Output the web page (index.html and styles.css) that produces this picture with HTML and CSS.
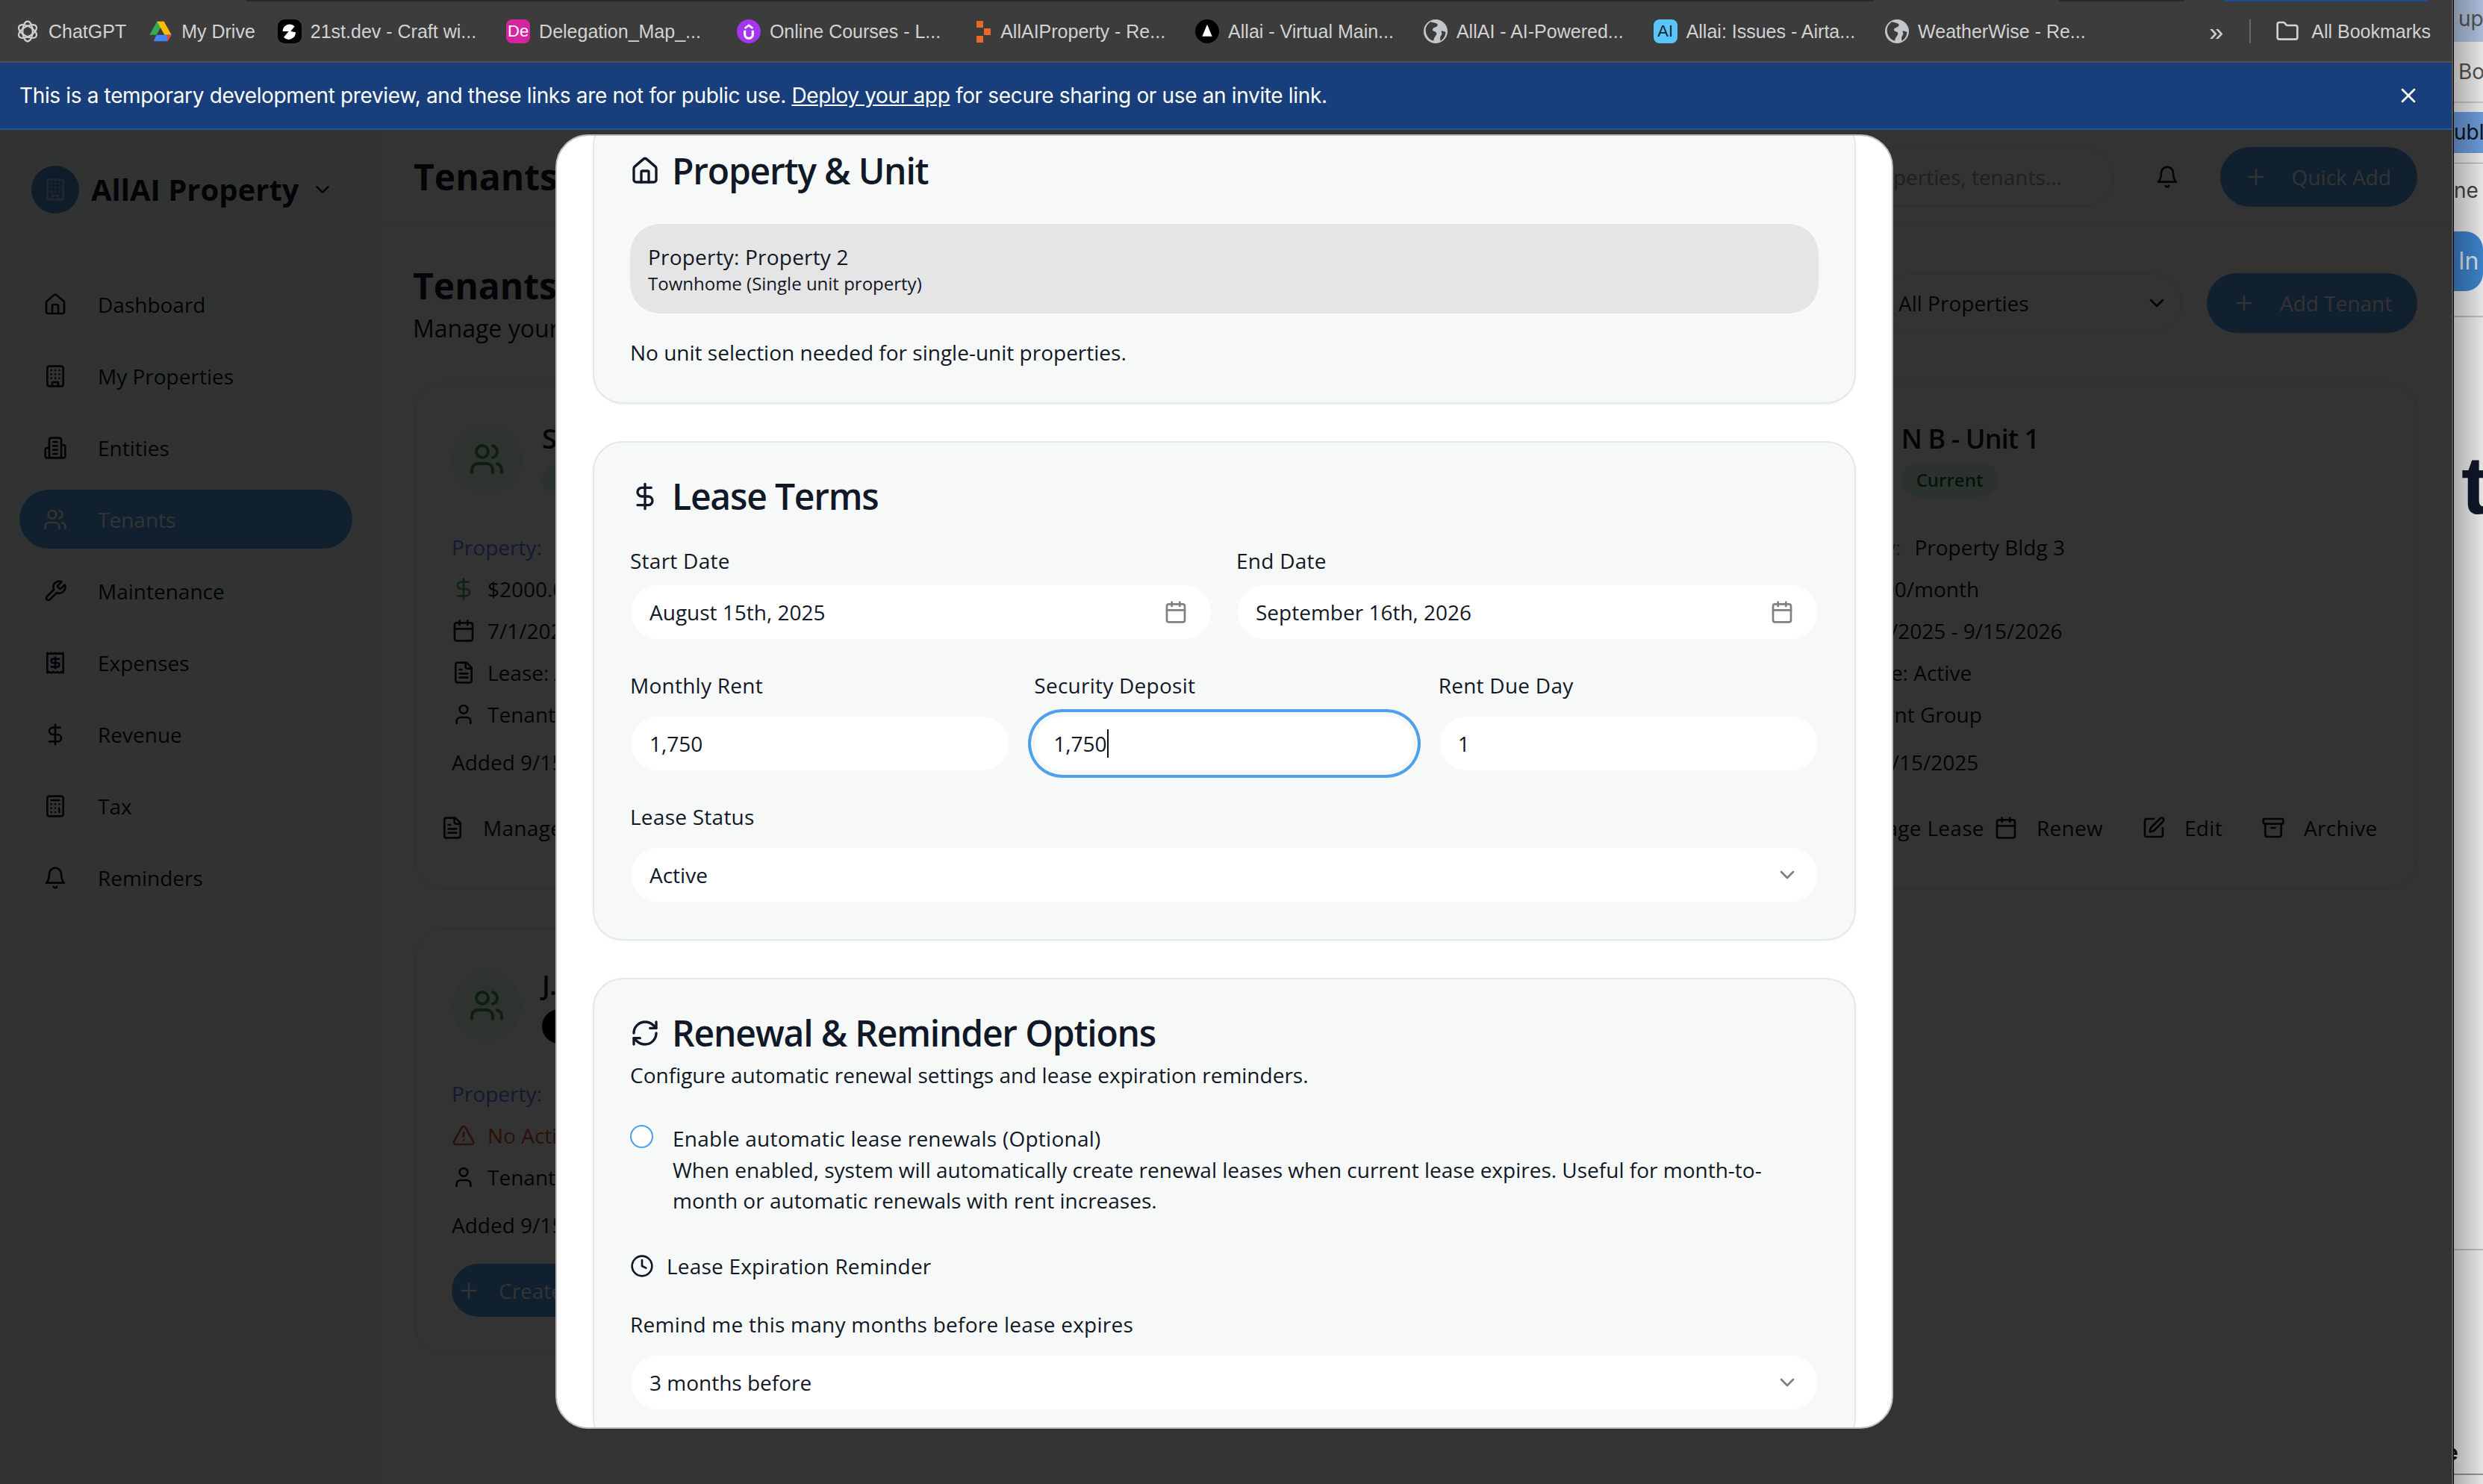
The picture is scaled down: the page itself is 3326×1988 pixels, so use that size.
FILE: index.html
```html
<!DOCTYPE html>
<html>
  <head>
    <meta charset="UTF-8" />
    <title>Tenants - AllAI Property</title>
    <link rel="stylesheet" href="styles.css">
  </head>
  <body>
    <svg class="sprite" xmlns="http://www.w3.org/2000/svg">
      <symbol id="i-home" viewBox="0 0 24 24"><path d="M15 21v-8a1 1 0 0 0-1-1h-4a1 1 0 0 0-1 1v8"/><path d="M3 10a2 2 0 0 1 .709-1.528l7-5.999a2 2 0 0 1 2.582 0l7 5.999A2 2 0 0 1 21 10v9a2 2 0 0 1-2 2H5a2 2 0 0 1-2-2z"/></symbol>
      <symbol id="i-building" viewBox="0 0 24 24"><rect width="16" height="20" x="4" y="2" rx="2"/><path d="M9 22v-4h6v4"/><path d="M8 6h.01M16 6h.01M12 6h.01M12 10h.01M12 14h.01M16 10h.01M16 14h.01M8 10h.01M8 14h.01"/></symbol>
      <symbol id="i-entities" viewBox="0 0 24 24"><path d="M6 22V4a2 2 0 0 1 2-2h8a2 2 0 0 1 2 2v18Z"/><path d="M6 12H4a2 2 0 0 0-2 2v6a2 2 0 0 0 2 2h2"/><path d="M18 9h2a2 2 0 0 1 2 2v9a2 2 0 0 1-2 2h-2"/><path d="M10 6h4M10 10h4M10 14h4M10 18h4"/></symbol>
      <symbol id="i-users" viewBox="0 0 24 24"><path d="M16 21v-2a4 4 0 0 0-4-4H6a4 4 0 0 0-4 4v2"/><circle cx="9" cy="7" r="4"/><path d="M22 21v-2a4 4 0 0 0-3-3.87"/><path d="M16 3.13a4 4 0 0 1 0 7.75"/></symbol>
      <symbol id="i-wrench" viewBox="0 0 24 24"><path d="M14.7 6.3a1 1 0 0 0 0 1.4l1.6 1.6a1 1 0 0 0 1.4 0l3.77-3.77a6 6 0 0 1-7.94 7.94l-6.91 6.91a2.12 2.12 0 0 1-3-3l6.91-6.91a6 6 0 0 1 7.94-7.94l-3.76 3.76z"/></symbol>
      <symbol id="i-receipt" viewBox="0 0 24 24"><path d="M4 2v20l2-1 2 1 2-1 2 1 2-1 2 1 2-1 2 1V2l-2 1-2-1-2 1-2-1-2 1-2-1-2 1Z"/><path d="M16 8h-6a2 2 0 1 0 0 4h4a2 2 0 1 1 0 4H8"/><path d="M12 17.5v-11"/></symbol>
      <symbol id="i-dollar" viewBox="0 0 24 24"><path d="M12 2v20"/><path d="M17 5H9.5a3.5 3.5 0 0 0 0 7h5a3.5 3.5 0 0 1 0 7H6"/></symbol>
      <symbol id="i-calc" viewBox="0 0 24 24"><rect width="16" height="20" x="4" y="2" rx="2"/><path d="M8 6h8"/><path d="M16 14v4"/><path d="M16 10h.01M12 10h.01M8 10h.01M12 14h.01M8 14h.01M12 18h.01M8 18h.01"/></symbol>
      <symbol id="i-bell" viewBox="0 0 24 24"><path d="M6 8a6 6 0 0 1 12 0c0 7 3 9 3 9H3s3-2 3-9"/><path d="M10.3 21a1.94 1.94 0 0 0 3.4 0"/></symbol>
      <symbol id="i-calendar" viewBox="0 0 24 24"><path d="M8 2v4"/><path d="M16 2v4"/><rect width="18" height="18" x="3" y="4" rx="2"/><path d="M3 10h18"/></symbol>
      <symbol id="i-file" viewBox="0 0 24 24"><path d="M15 2H6a2 2 0 0 0-2 2v16a2 2 0 0 0 2 2h12a2 2 0 0 0 2-2V7Z"/><path d="M14 2v4a2 2 0 0 0 2 2h4"/><path d="M10 9H8"/><path d="M16 13H8"/><path d="M16 17H8"/></symbol>
      <symbol id="i-user" viewBox="0 0 24 24"><path d="M19 21v-2a4 4 0 0 0-4-4H9a4 4 0 0 0-4 4v2"/><circle cx="12" cy="7" r="4"/></symbol>
      <symbol id="i-alert" viewBox="0 0 24 24"><path d="m21.73 18-8-14a2 2 0 0 0-3.48 0l-8 14A2 2 0 0 0 4 21h16a2 2 0 0 0 1.73-3"/><path d="M12 9v4"/><path d="M12 17h.01"/></symbol>
      <symbol id="i-refresh" viewBox="0 0 24 24"><path d="M3 12a9 9 0 0 1 9-9 9.75 9.75 0 0 1 6.74 2.74L21 8"/><path d="M21 3v5h-5"/><path d="M21 12a9 9 0 0 1-9 9 9.75 9.75 0 0 1-6.74-2.74L3 16"/><path d="M8 16H3v5"/></symbol>
      <symbol id="i-clock" viewBox="0 0 24 24"><circle cx="12" cy="12" r="10"/><path d="M12 6v6l4 2"/></symbol>
      <symbol id="i-chevron" viewBox="0 0 24 24"><path d="m6 9 6 6 6-6"/></symbol>
      <symbol id="i-plus" viewBox="0 0 24 24"><path d="M5 12h14"/><path d="M12 5v14"/></symbol>
      <symbol id="i-pen" viewBox="0 0 24 24"><path d="M12 3H5a2 2 0 0 0-2 2v14a2 2 0 0 0 2 2h14a2 2 0 0 0 2-2v-7"/><path d="M18.375 2.625a1 1 0 0 1 3 3l-9.013 9.014a2 2 0 0 1-.853.505l-2.873.84a.5.5 0 0 1-.62-.62l.84-2.873a2 2 0 0 1 .506-.852z"/></symbol>
      <symbol id="i-archive" viewBox="0 0 24 24"><rect width="20" height="5" x="2" y="3" rx="1"/><path d="M4 8v11a2 2 0 0 0 2 2h12a2 2 0 0 0 2-2V8"/><path d="M10 12h4"/></symbol>
      <symbol id="i-x" viewBox="0 0 24 24"><path d="M18 6 6 18"/><path d="m6 6 12 12"/></symbol>
      <symbol id="i-folder" viewBox="0 0 24 24"><path d="M20 20a2 2 0 0 0 2-2V8a2 2 0 0 0-2-2h-7.9a2 2 0 0 1-1.69-.9L9.6 3.9A2 2 0 0 0 7.93 3H4a2 2 0 0 0-2 2v13a2 2 0 0 0 2 2Z"/></symbol>
      <symbol id="i-globe" viewBox="0 0 24 24"><circle cx="12" cy="12" r="12" fill="#c3c6ca" stroke="none"/><path d="M7 2.5c3 1 7 1 7 3 0 3-5 2-5 5 0 2 4 1 4 4 0 2-3 3-3 7-5-1-8-6-8-11 0-3 2-6 5-8Zm11 9 4 1c0 4-2 7-5 9-1-3 0-5 1-6 1-2-1-3 0-4Z" fill="#3c3c3c" stroke="none"/></symbol>
    </svg>

    <div class="browser">
      <div class="tab-edge"></div>
      <div class="bookmarks">
        <div class="bookmark bookmark-tight">
          <svg class="fav" viewBox="0 0 24 24" fill="none" stroke="#d0d0d0" stroke-width="1.6"><ellipse cx="12" cy="12" rx="5" ry="10"/><ellipse cx="12" cy="12" rx="5" ry="10" transform="rotate(60 12 12)"/><ellipse cx="12" cy="12" rx="5" ry="10" transform="rotate(120 12 12)"/></svg>
          <span>ChatGPT</span>
        </div>
        <div class="bookmark bookmark-tight">
          <svg class="fav" viewBox="0 0 24 24"><path d="M8.5 2h7L8 15.5H1z" fill="#34a853"/><path d="M8.5 2h7L23 15.5h-7z" fill="#fbbc04"/><path d="M5 22l3-6.500h15L19 22z" fill="#4285f4"/><path d="M23 15.500h-5l1 6.500z" fill="#ea4335"/></svg>
          <span>My Drive</span>
        </div>
        <div class="bookmark">
          <svg class="fav" viewBox="0 0 24 24"><rect width="24" height="24" rx="7" fill="#000"/><path d="M5 12a7 7 0 0 1 12-5l-4 5 5 1a7 7 0 0 1-12 5l5-6z" fill="#fff"/></svg>
          <span>21st.dev - Craft wi...</span>
        </div>
        <div class="bookmark bookmark-wide">
          <div class="fav fav-text fav-de">De</div>
          <span>Delegation_Map_...</span>
        </div>
        <div class="bookmark bookmark-wide">
          <svg class="fav" viewBox="0 0 24 24"><circle cx="12" cy="12" r="12" fill="#a435f0"/><path d="M8 9l4-3 4 3" fill="none" stroke="#fff" stroke-width="2"/><path d="M8 11v4a4 4 0 0 0 8 0v-4" fill="none" stroke="#fff" stroke-width="2.400"/></svg>
          <span>Online Courses - L...</span>
        </div>
        <div class="bookmark">
          <svg class="fav-small" viewBox="0 0 20 32"><path d="M0 2h9v9H0zM0 22h9v9H0zM10 12h9v9h-9z" fill="#e8692c"/></svg>
          <span>AllAIProperty - Re...</span>
        </div>
        <div class="bookmark">
          <svg class="fav" viewBox="0 0 24 24"><circle cx="12" cy="12" r="12" fill="#000"/><path d="M12 5l5 12H7z" fill="#fff"/></svg>
          <span>Allai - Virtual Main...</span>
        </div>
        <div class="bookmark">
          <svg class="fav"><use href="#i-globe"/></svg>
          <span>AllAI - AI-Powered...</span>
        </div>
        <div class="bookmark">
          <div class="fav fav-text fav-ai">AI</div>
          <span>Allai: Issues - Airta...</span>
        </div>
        <div class="bookmark">
          <svg class="fav"><use href="#i-globe"/></svg>
          <span>WeatherWise - Re...</span>
        </div>
        <div class="bookmarks-end">
          <span class="more">&raquo;</span>
          <div class="bookmarks-sep"></div>
          <div class="bookmark bookmark-all">
            <svg class="icon"><use href="#i-folder"/></svg>
            <span>All Bookmarks</span>
          </div>
        </div>
      </div>

      <div class="banner">
        <span>This is a temporary development preview, and these links are not for public use. <a class="banner-link" href="#">Deploy your app</a> for secure sharing or use an invite link.</span>
        <svg class="icon"><use href="#i-x"/></svg>
      </div>

      <div class="app">
        <aside class="sidebar">
          <div class="brand">
            <div class="brand-logo"><svg class="icon"><use href="#i-building"/></svg></div>
            <span class="brand-name">AllAI Property</span>
            <svg class="icon brand-chevron"><use href="#i-chevron"/></svg>
          </div>
          <nav class="nav">
            <a class="nav-item"><svg class="icon"><use href="#i-home"/></svg>Dashboard</a>
            <a class="nav-item"><svg class="icon"><use href="#i-building"/></svg>My Properties</a>
            <a class="nav-item"><svg class="icon"><use href="#i-entities"/></svg>Entities</a>
            <a class="nav-item nav-active"><svg class="icon"><use href="#i-users"/></svg>Tenants</a>
            <a class="nav-item"><svg class="icon"><use href="#i-wrench"/></svg>Maintenance</a>
            <a class="nav-item"><svg class="icon"><use href="#i-receipt"/></svg>Expenses</a>
            <a class="nav-item"><svg class="icon"><use href="#i-dollar"/></svg>Revenue</a>
            <a class="nav-item"><svg class="icon"><use href="#i-calc"/></svg>Tax</a>
            <a class="nav-item"><svg class="icon"><use href="#i-bell"/></svg>Reminders</a>
          </nav>
          <div class="sidebar-foot"></div>
        </aside>

        <main class="main">
          <header class="topbar">
            <h1 class="page-title">Tenants</h1>
            <div class="topbar-right">
              <div class="search">Search properties, tenants...</div>
              <div class="bell"><svg class="icon"><use href="#i-bell"/></svg></div>
              <button class="btn btn-quick"><svg class="icon"><use href="#i-plus"/></svg>Quick Add</button>
            </div>
          </header>

          <div class="content">
            <div class="content-head">
              <div>
                <h2 class="page-title">Tenants</h2>
                <p class="page-sub">Manage your tenants and leases</p>
              </div>
              <div class="content-tools">
                <div class="filter">All Properties<svg class="icon"><use href="#i-chevron"/></svg></div>
                <button class="btn btn-add"><svg class="icon"><use href="#i-plus"/></svg>Add Tenant</button>
              </div>
            </div>

            <div class="tenant-grid">
              <article class="tenant">
                <div class="tenant-head">
                  <div class="avatar"><svg class="icon"><use href="#i-users"/></svg></div>
                  <div>
                    <div class="tenant-name">Sarah N</div>
                    <span class="badge badge-current">Current</span>
                  </div>
                </div>
                <div class="tenant-rows">
                  <div class="row"><span class="row-key">Property:</span>Property 2</div>
                  <div class="row"><svg class="icon green"><use href="#i-dollar"/></svg>$2000.00/month</div>
                  <div class="row"><svg class="icon"><use href="#i-calendar"/></svg>7/1/2025 - 9/15/2026</div>
                  <div class="row"><svg class="icon"><use href="#i-file"/></svg>Lease: Active</div>
                  <div class="row"><svg class="icon"><use href="#i-user"/></svg>Tenant Group</div>
                </div>
                <div class="added">Added 9/15/2025</div>
                <div class="actions">
                  <div class="action-group">
                    <a class="action"><svg class="icon"><use href="#i-file"/></svg>Manage Lease</a>
                  </div>
                </div>
              </article>

              <article class="tenant tenant-empty"></article>

              <article class="tenant">
                <div class="tenant-head">
                  <div class="avatar"><svg class="icon"><use href="#i-users"/></svg></div>
                  <div>
                    <div class="tenant-name">N B - Unit 1</div>
                    <span class="badge badge-current">Current</span>
                  </div>
                </div>
                <div class="tenant-rows">
                  <div class="row"><span class="row-key">Property:</span>Property Bldg 3</div>
                  <div class="row"><svg class="icon green"><use href="#i-dollar"/></svg>$2000/month</div>
                  <div class="row"><svg class="icon"><use href="#i-calendar"/></svg>8/15/2025 - 9/15/2026</div>
                  <div class="row"><svg class="icon"><use href="#i-file"/></svg>Lease: Active</div>
                  <div class="row"><svg class="icon"><use href="#i-user"/></svg>Tenant Group</div>
                </div>
                <div class="added">Added 9/15/2025</div>
                <div class="actions">
                  <div class="action-group">
                    <a class="action"><svg class="icon"><use href="#i-file"/></svg>Manage Lease</a>
                    <a class="action"><svg class="icon"><use href="#i-calendar"/></svg>Renew</a>
                  </div>
                  <a class="action"><svg class="icon"><use href="#i-pen"/></svg>Edit</a>
                  <a class="action"><svg class="icon"><use href="#i-archive"/></svg>Archive</a>
                </div>
              </article>

              <article class="tenant">
                <div class="tenant-head">
                  <div class="avatar"><svg class="icon"><use href="#i-users"/></svg></div>
                  <div>
                    <div class="tenant-name">J. Smith</div>
                    <span class="badge badge-none">No Lease</span>
                  </div>
                </div>
                <div class="tenant-rows">
                  <div class="row"><span class="row-key">Property:</span>Property 1</div>
                  <div class="row row-warn"><svg class="icon"><use href="#i-alert"/></svg>No Active Lease</div>
                  <div class="row"><svg class="icon"><use href="#i-user"/></svg>Tenant Group</div>
                </div>
                <div class="added">Added 9/15/2025</div>
                <button class="btn btn-create"><svg class="icon"><use href="#i-plus"/></svg>Create Lease</button>
              </article>
            </div>
          </div>
        </main>

        <div class="overlay"></div>

        <div class="modal">
          <div class="modal-body">
            <section class="panel">
              <h3 class="panel-title"><svg class="icon"><use href="#i-home"/></svg>Property &amp; Unit</h3>
              <div class="prop-box">
                <div class="prop-name">Property: Property 2</div>
                <div class="prop-type">Townhome (Single unit property)</div>
              </div>
              <p class="panel-note">No unit selection needed for single-unit properties.</p>
            </section>

            <section class="panel">
              <h3 class="panel-title"><svg class="icon"><use href="#i-dollar"/></svg>Lease Terms</h3>
              <div class="form-row form-row-2">
                <div>
                  <label class="field-label field-label-tight">Start Date</label>
                  <div class="field">August 15th, 2025<svg class="icon"><use href="#i-calendar"/></svg></div>
                </div>
                <div>
                  <label class="field-label field-label-tight">End Date</label>
                  <div class="field">September 16th, 2026<svg class="icon"><use href="#i-calendar"/></svg></div>
                </div>
              </div>
              <div class="form-row form-row-3">
                <div>
                  <label class="field-label">Monthly Rent</label>
                  <div class="field">1,750</div>
                </div>
                <div>
                  <label class="field-label">Security Deposit</label>
                  <div class="field field-focus">1,750<span class="caret"></span></div>
                </div>
                <div>
                  <label class="field-label">Rent Due Day</label>
                  <div class="field">1</div>
                </div>
              </div>
              <div class="form-row">
                <div>
                  <label class="field-label">Lease Status</label>
                  <div class="field">Active<svg class="icon field-chevron"><use href="#i-chevron"/></svg></div>
                </div>
              </div>
            </section>

            <section class="panel">
              <h3 class="panel-title"><svg class="icon"><use href="#i-refresh"/></svg>Renewal &amp; Reminder Options</h3>
              <p class="panel-sub">Configure automatic renewal settings and lease expiration reminders.</p>
              <div class="check-row">
                <div class="radio"></div>
                <div>
                  <div class="check-label">Enable automatic lease renewals (Optional)</div>
                  <div class="check-desc">When enabled, system will automatically create renewal leases when current lease expires. Useful for month-to-month or automatic renewals with rent increases.</div>
                </div>
              </div>
              <div class="reminder-head"><svg class="icon"><use href="#i-clock"/></svg>Lease Expiration Reminder</div>
              <label class="field-label reminder-label">Remind me this many months before lease expires</label>
              <div class="field">3 months before<svg class="icon field-chevron"><use href="#i-chevron"/></svg></div>
            </section>
          </div>
        </div>
      </div>
    </div>

    <div class="window-edge"></div>

    <div class="other-window">
      <div class="ow-tab">upd</div>
      <div class="ow-link">Boo</div>
      <div class="ow-blue">ubli</div>
      <div class="ow-text">ne</div>
      <div class="ow-btn">In</div>
      <div class="ow-line ow-line-first"></div>
      <div class="ow-big">t</div>
      <div class="ow-line"></div>
      <div class="ow-small">e</div>
      <div class="ow-shade"></div>
    </div>
  </body>
</html>
```

FILE: styles.css
```css
* {
  box-sizing: border-box;
}
html,
body {
  margin: 0;
  height: 1988px;
  overflow: hidden;
}
body {
  display: flex;
  font-family: "Open Sans", "Noto Sans", sans-serif;
  font-size: 28px;
  color: #111827;
  background: #333;
}
h1,
h2,
h3,
p {
  margin: 0;
}
.sprite {
  display: none;
}
.icon {
  width: 32px;
  height: 32px;
  flex: none;
  fill: none;
  stroke: currentColor;
  stroke-width: 2;
  stroke-linecap: round;
  stroke-linejoin: round;
}
.browser {
  width: 3284px;
  flex: none;
}
.window-edge {
  width: 3px;
  flex: none;
  background: #555;
  border-right: 1px solid #000;
}

/* browser chrome */
.tab-edge {
  height: 2px;
  background: linear-gradient(90deg, #3c3c3c 330px, #282828 330px, #282828 2509px, #3c3c3c 2509px, #3c3c3c 2757px, #282828 2757px, #282828 2925px, #3c3c3c 2925px, #3c3c3c 2979px, #1d4c94 2979px, #1d4c94 3252px, #3c3c3c 3252px);
}
.bookmarks {
  height: 80px;
  padding: 0 28px 0 21px;
  display: flex;
  align-items: center;
  gap: 40px;
  background: #3c3c3c;
  color: #d2d2d2;
  font-family: "Liberation Sans", Arial, sans-serif;
  font-size: 25px;
}
.bookmark {
  display: flex;
  align-items: center;
  gap: 12px;
  white-space: nowrap;
}
.bookmark-tight {
  margin-right: -10px;
}
.bookmark-wide {
  margin-right: 8px;
}
.fav {
  width: 32px;
  height: 32px;
  flex: none;
}
.fav-small {
  width: 20px;
  height: 32px;
  flex: none;
}
.fav-text {
  border-radius: 8px;
  font-size: 22px;
  line-height: 32px;
  text-align: center;
}
.fav-de {
  background: #d6249f;
  color: #fff;
}
.fav-ai {
  background: #5cc5f7;
  color: #10263a;
}
.bookmarks-end {
  margin-left: auto;
  display: flex;
  align-items: center;
}
.more {
  font-size: 34px;
  line-height: 32px;
  margin-right: 35px;
}
.bookmarks-sep {
  width: 2px;
  height: 32px;
  background: #666;
  margin-right: 33px;
}
.bookmark-all {
  gap: 16px;
}
.banner {
  height: 92px;
  padding: 0 42px 0 26px;
  display: flex;
  align-items: center;
  justify-content: space-between;
  background: #183f7c;
  border-top: 2px solid #505050;
  border-bottom: 2px solid #2a5298;
  color: #fff;
  font-family: Inter, "Liberation Sans", sans-serif;
  font-size: 28px;
  letter-spacing: -0.35px;
}
.banner-link {
  color: #fff;
  text-decoration: underline;
}

/* app behind the dialog */
.app {
  position: relative;
  height: 1814px;
  display: flex;
  background: #fff;
  overflow: hidden;
}
.overlay {
  position: absolute;
  inset: 0;
  background: rgba(0, 0, 0, 0.8);
}
.sidebar {
  width: 505px;
  flex: none;
  display: flex;
  flex-direction: column;
  background: #f5fff7;
  border-right: 2px solid #ececec;
}
.brand {
  height: 159px;
  padding: 2px 0 0 42px;
  display: flex;
  align-items: center;
  border-bottom: 2px solid #eee;
}
.brand-logo {
  width: 64px;
  height: 64px;
  border-radius: 50%;
  display: flex;
  align-items: center;
  justify-content: center;
  background: #4a8fd8;
  color: #9fc4ea;
}
.brand-name {
  margin-left: 16px;
  font-size: 40px;
  font-weight: 700;
}
.brand-chevron {
  margin-left: 16px;
  width: 30px;
  height: 30px;
}
.nav {
  padding: 35px 31px 0 26px;
  display: flex;
  flex-direction: column;
  gap: 17px;
}
.nav-item {
  height: 79px;
  padding-left: 32px;
  display: flex;
  align-items: center;
  gap: 41px;
  border-radius: 40px;
  font-weight: 500;
}
.nav-active {
  background: #509fe8;
  color: #fff;
}
.sidebar-foot {
  margin-top: auto;
  height: 23px;
  border-top: 2px solid #ececec;
}
.main {
  flex: 1;
  min-width: 0;
}
.topbar {
  height: 126px;
  padding: 2px 46px 0 49px;
  display: flex;
  align-items: center;
  justify-content: space-between;
  border-bottom: 2px solid #eee;
}
.page-title {
  font-size: 48px;
  line-height: 64px;
  font-weight: 700;
}
.topbar-right {
  display: flex;
  align-items: center;
  gap: 32px;
}
.search {
  width: 512px;
  height: 80px;
  padding-left: 73px;
  display: flex;
  align-items: center;
  border: 2px solid #eee;
  border-radius: 40px;
  color: #999;
}
.bell {
  width: 78px;
  display: flex;
  justify-content: center;
}
.btn {
  display: flex;
  align-items: center;
  border: none;
  color: #fff;
  background: #509fe8;
  font: inherit;
  font-weight: 500;
}
.btn-quick,
.btn-add {
  height: 80px;
  padding: 0 32px;
  gap: 32px;
  border-radius: 40px;
}
.btn-quick {
  padding-right: 35px;
}
.btn-add {
  width: 282px;
  padding-left: 34px;
}
.content {
  padding: 51px 46px 0 50px;
}
.content-head {
  margin-left: -2px;
  display: flex;
  align-items: center;
  justify-content: space-between;
  margin-bottom: 51px;
}
.page-sub {
  margin-top: 5px;
  line-height: 40px;
  font-size: 32px;
}
.content-tools {
  display: flex;
  align-items: center;
  gap: 33px;
}
.filter {
  width: 404px;
  height: 80px;
  padding: 0 16px 0 22px;
  display: flex;
  align-items: center;
  justify-content: space-between;
  border: 2px solid #eee;
  border-radius: 40px;
}
.tenant-grid {
  display: grid;
  grid-template-columns: repeat(3, 1fr);
  gap: 51px 48px;
  align-items: start;
}
.tenant {
  padding: 51px 48px 49px;
  border: 2px solid #eee;
  border-radius: 40px;
}
.tenant-empty {
  align-self: stretch;
}
.tenant-head {
  display: flex;
  align-items: center;
  gap: 27px;
}
.avatar {
  width: 94px;
  height: 94px;
  flex: none;
  border-radius: 50%;
  display: flex;
  align-items: center;
  justify-content: center;
  background: #eaffef;
  color: #3f9a50;
}
.avatar .icon {
  width: 48px;
  height: 48px;
}
.tenant-name {
  font-size: 36px;
  font-weight: 600;
  line-height: 48px;
  letter-spacing: -0.9px;
  white-space: nowrap;
}
.badge {
  margin-top: 8px;
  display: inline-block;
  height: 46px;
  padding: 0 20px;
  border-radius: 23px;
  font-size: 24px;
  font-weight: 600;
  line-height: 46px;
  white-space: nowrap;
}
.badge-current {
  background: #dcfce7;
  color: #166534;
}
.badge-none {
  background: #000;
  color: #fff;
}
.tenant-rows {
  margin-top: 47px;
  display: flex;
  flex-direction: column;
  gap: 16px;
}
.row {
  height: 40px;
  display: flex;
  align-items: center;
  gap: 16px;
  white-space: nowrap;
}
.row-key {
  margin-right: 2px;
  color: #5a80f5;
  font-weight: 500;
}
.green {
  color: #50b060;
}
.row-warn {
  color: #d9552b;
}
.added {
  margin-top: 24px;
  line-height: 40px;
}
.actions {
  margin: 36px 0 0 -15px;
  height: 64px;
  display: flex;
  align-items: center;
  gap: 52px;
}
.action-group {
  display: flex;
  gap: 13px;
}
.action {
  display: flex;
  align-items: center;
  gap: 25px;
  letter-spacing: 0.3px;
  white-space: nowrap;
  font-weight: 500;
}
.btn-create {
  margin-top: 32px;
  height: 71px;
  padding: 0 28px 0 7px;
  gap: 24px;
  border-radius: 36px;
  white-space: nowrap;
}

/* dialog */
.modal {
  position: absolute;
  left: 744px;
  top: 6px;
  width: 1792px;
  height: 1734px;
  overflow: hidden;
  background: #fff;
  border: 2px solid #bdbdbd;
  border-radius: 44px;
}
.modal-body {
  margin-top: -27px;
  padding: 0 48px;
  display: flex;
  flex-direction: column;
  gap: 50px;
}
.panel {
  padding: 40px 48px 48px;
  background: #f7f9f8;
  border: 2px solid #e2e8f0;
  border-radius: 40px;
  box-shadow: 0 1px 3px rgba(0, 0, 0, 0.05);
}
.panel-title {
  display: flex;
  align-items: center;
  gap: 16px;
  font-size: 48px;
  font-weight: 600;
  line-height: 64px;
  letter-spacing: -1.2px;
  color: #111827;
}
.panel-title .icon {
  width: 40px;
  height: 40px;
}
.prop-box {
  margin-top: 39px;
  height: 120px;
  padding: 24px;
  background: #e5e5e5;
  border-radius: 40px;
}
.prop-name {
  font-weight: 500;
  line-height: 40px;
  letter-spacing: 0.2px;
}
.prop-type {
  font-size: 24px;
  line-height: 32px;
}
.panel-note {
  margin: 32px 0 -1px;
  line-height: 40px;
}
.form-row {
  margin-top: 40px;
}
.form-row-2 {
  margin-top: 34px;
  display: grid;
  grid-template-columns: repeat(2, 1fr);
  gap: 32px;
}
.form-row-3 {
  display: grid;
  grid-template-columns: repeat(3, 1fr);
  gap: 32px;
}
.field-label {
  display: block;
  margin-bottom: 20px;
  font-weight: 500;
  line-height: 40px;
  letter-spacing: 0.25px;
}
.field-label-tight {
  margin-bottom: 11px;
}
.field {
  height: 76px;
  padding: 0 24px;
  display: flex;
  align-items: center;
  justify-content: space-between;
  background: #fff;
  border: 2px solid #f7f9f8;
  border-radius: 38px;
}
.field .icon {
  margin-right: 7px;
  color: #808080;
}
.field .field-chevron {
  margin-right: 0;
}
.field-focus {
  justify-content: flex-start;
  box-shadow: 0 0 0 4px #f7f9f8, 0 0 0 8px #4f9fea;
}
.caret {
  width: 2px;
  height: 38px;
  background: #111;
}
.panel-sub {
  margin-top: 4px;
  line-height: 40px;
}
.check-row {
  margin-top: 45px;
  display: flex;
  align-items: flex-start;
  gap: 26px;
}
.radio {
  margin-top: 2px;
  width: 31px;
  height: 31px;
  flex: none;
  background: #fff;
  border: 2px solid #4f9fea;
  border-radius: 50%;
}
.check-label {
  font-weight: 500;
  line-height: 40px;
  letter-spacing: 0.25px;
}
.check-desc {
  margin-top: 2px;
  line-height: 41px;
}
.reminder-head {
  margin-top: 47px;
  display: flex;
  align-items: center;
  gap: 17px;
  font-weight: 500;
  line-height: 40px;
  letter-spacing: 0.2px;
}
.reminder-label {
  margin-top: 38px;
}

/* window behind the browser */
.other-window {
  position: relative;
  flex: 1;
  overflow: hidden;
  background: #f2f2f2;
  font-family: Inter, "Liberation Sans", sans-serif;
  font-size: 28px;
  white-space: nowrap;
}
.ow-tab {
  height: 56px;
  padding-left: 6px;
  line-height: 50px;
  background: #b4c6e4;
  color: #555;
}
.ow-link {
  height: 82px;
  padding-left: 6px;
  line-height: 80px;
  color: #555;
  border-bottom: 2px solid #ccc;
}
.ow-blue {
  margin-top: 12px;
  height: 55px;
  line-height: 55px;
  background: #6f9fe2;
  color: #111;
}
.ow-text {
  margin-top: 13px;
  height: 80px;
  line-height: 72px;
  border-top: 1px solid #aaa;
  color: #444;
}
.ow-btn {
  margin-top: 12px;
  height: 80px;
  padding-left: 6px;
  font-size: 32px;
  line-height: 80px;
  background: #3f86d2;
  color: #dfe8f2;
  border-radius: 0 24px 24px 0;
}
.ow-big {
  margin-top: 165px;
  height: 120px;
  padding-left: 10px;
  font-family: "Liberation Sans", sans-serif;
  font-size: 110px;
  font-weight: 700;
  line-height: 120px;
  color: #0f172a;
}
.ow-line {
  margin-top: 963px;
  height: 2px;
  background: #bcc3cc;
}
.ow-line-first {
  margin-top: 33px;
}
.ow-small {
  margin: 258px 0 0 -11px;
  height: 43px;
  font-weight: 700;
  line-height: 26px;
  color: #111;
  border-bottom: 2px solid #999;
}
.ow-shade {
  position: absolute;
  inset: 0;
  background: linear-gradient(90deg, rgba(0, 0, 0, 0.28), rgba(0, 0, 0, 0.06));
}
```
